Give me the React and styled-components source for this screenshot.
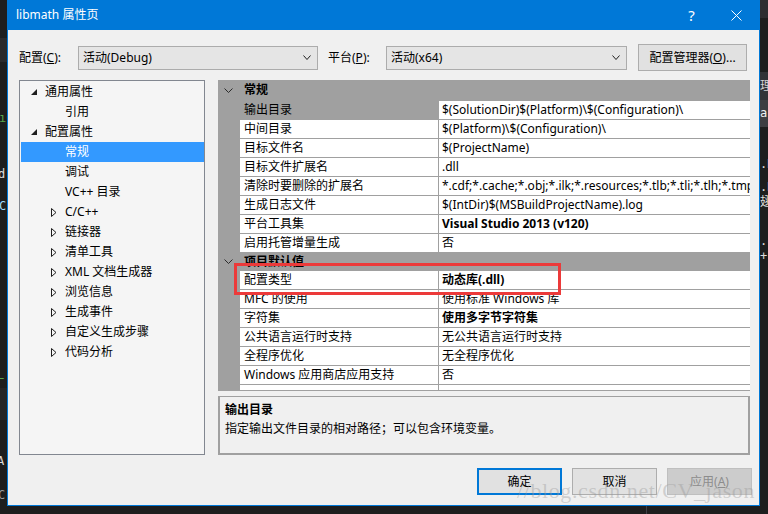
import React from 'react';
import styled, { createGlobalStyle } from 'styled-components';

const UI_FONT = '"Noto Sans", "Noto Sans CJK SC", sans-serif';

const GlobalStyle = createGlobalStyle`
  html, body {
    margin: 0;
    padding: 0;
    background: #1e1e1e;
  }
  body {
    font-family: ${UI_FONT};
    font-size: 12px;
    color: #000;
  }
  * {
    box-sizing: border-box;
  }
`;

const Page = styled.div`
  position: relative;
  width: 768px;
  height: 514px;
  overflow: hidden;
  background: #1e1e1e;
  display: flex;
  flex-direction: column;
`;

const Desk = styled.div`
  display: flex;
  height: 506px;
  flex: none;
`;

const EditorStrip = styled.div`
  width: ${p => p.$width}px;
  flex: none;
  display: flex;
  flex-direction: column;
  overflow: hidden;
  font-family: "DejaVu Sans Mono", "Noto Sans CJK SC", monospace;
  font-size: 12px;
`;

const StripPiece = styled.div`
  flex: none;
  height: ${p => p.$h}px;
  line-height: ${p => p.$h}px;
  overflow: hidden;
  background: ${p => p.$bg || 'transparent'};
  color: ${p => p.$color || '#dcdcdc'};
  white-space: nowrap;
  text-indent: ${p => p.$shift || 0}px;
`;

const BottomStrip = styled.div`
  flex: 1;
  display: flex;
  padding-left: 646px;
`;

const StripRule = styled.div`
  width: 1px;
  background: #3f3f46;
`;

// title + chrome
const Dialog = styled.div`
  width: 753px;
  height: 506px;
  flex: none;
  display: flex;
  flex-direction: column;
  background: #f0f0f0;
  border: 1px solid #0078d7;
  border-top: none;
`;

const TitleBar = styled.div`
  height: 30px;
  flex: none;
  display: flex;
  align-items: center;
  background: #0078d7;
  color: #fff;
  padding-left: 8px;
`;

const TitleText = styled.div`
  flex: 1;
  font-size: 12px;
  line-height: 16px;
`;

const CaptionButton = styled.div`
  width: 45px;
  height: 30px;
  display: flex;
  align-items: center;
  justify-content: center;
  font-size: 15px;
  color: #fff;
`;

const Body = styled.div`
  flex: 1;
  display: flex;
  flex-direction: column;
  padding: 0 7px 0 11px;
`;

const ConfigRow = styled.div`
  margin-top: 14px;
  height: 27px;
  display: flex;
  align-items: center;
`;

const FieldLabel = styled.div`
  width: ${p => p.$w}px;
  margin-left: ${p => p.$ml || 0}px;
  line-height: 16px;
`;

const Combo = styled.div`
  width: ${p => p.$w}px;
  height: 24px;
  display: flex;
  align-items: center;
  justify-content: space-between;
  padding: 0 6px 0 4px;
  background: #e5e5e5;
  border: 1px solid #acacac;
  line-height: 16px;
`;

const PushButton = styled.div`
  width: ${p => p.$w}px;
  height: 27px;
  margin-left: ${p => p.$ml || 0}px;
  display: flex;
  align-items: center;
  justify-content: center;
  line-height: 16px;
  background: ${p => (p.$disabled ? '#cccccc' : '#e1e1e1')};
  color: ${p => (p.$disabled ? '#8c8c8c' : '#000')};
  border: ${p =>
    p.$focused ? '2px solid #0078d7' : `1px solid ${p.$disabled ? '#bfbfbf' : '#adadad'}`};
`;

const Main = styled.div`
  margin-top: 9px;
  height: 375px;
  display: flex;
  gap: 13px;
`;

// tree
const Tree = styled.div`
  width: 186px;
  flex: none;
  background: #f5f5f5;
  border: 1px solid #828790;
  padding-top: 1px;
  display: flex;
  flex-direction: column;
`;

const TreeRow = styled.div`
  height: 20px;
  display: flex;
  align-items: center;
  padding-left: ${p => p.$indent}px;
  margin-left: 1px;
  background: ${p => (p.$selected ? '#3399ff' : 'transparent')};
  color: ${p => (p.$selected ? '#fff' : '#000')};
  line-height: 16px;
  white-space: nowrap;
`;

const Expander = styled.div`
  width: 17px;
  flex: none;
  display: flex;
  align-items: center;
  padding-left: 3px;
`;

// property grid
const RightCol = styled.div`
  position: relative;
  width: 532px;
  flex: none;
  display: flex;
  flex-direction: column;
  gap: 5px;
`;

const Grid = styled.div`
  height: 311px;
  flex: none;
  overflow: hidden;
  background: #a0a0a0;
  border-bottom: 1px solid #a0a0a0;
  display: flex;
  flex-direction: column;
  gap: 1px;
`;

const CategoryRow = styled.div`
  height: ${p => p.$h}px;
  flex: none;
  display: flex;
  align-items: center;
  font-weight: bold;
  line-height: 16px;
`;

const CategoryToggle = styled.div`
  width: 26px;
  flex: none;
  display: flex;
  padding-left: 6px;
`;

const PropRow = styled.div`
  height: 18px;
  flex: none;
  display: flex;
  padding-left: 22px;
  gap: 1px;
`;

const NameCell = styled.div`
  width: 198px;
  flex: none;
  padding-left: 4px;
  background: ${p => (p.$selected ? 'transparent' : '#fff')};
  line-height: 18px;
  white-space: nowrap;
  overflow: hidden;
`;

const ValueCell = styled.div`
  flex: 1;
  padding-left: 3px;
  background: #fff;
  line-height: 18px;
  white-space: nowrap;
  overflow: hidden;
  font-weight: ${p => (p.$bold ? 'bold' : 'normal')};
`;

const Description = styled.div`
  height: 59px;
  flex: none;
  padding: 3px 0 0 5px;
  background: #f0f0f0;
  border: 2px solid #a0a0a0;
  border-top-width: 1px;
  line-height: 19px;
`;

const DescTitle = styled.div`
  font-weight: bold;
`;

const Callout = styled.div`
  position: absolute;
  left: 16px;
  top: 183px;
  width: 327px;
  height: 32px;
  border: 3px solid #ec3a3a;
  pointer-events: none;
`;

const Footer = styled.div`
  margin-top: 13px;
  display: flex;
  justify-content: flex-end;
  gap: 10px;
`;

const Watermark = styled.div`
  position: absolute;
  left: 517px;
  top: 478px;
  font-family: "Liberation Serif", serif;
  font-size: 22px;
  line-height: 26px;
  letter-spacing: 0.6px;
  color: rgba(150, 150, 150, 0.38);
  white-space: nowrap;
  pointer-events: none;
`;

const ChevronDown = ({ w = 8, h = 5, color = '#1e1e1e' }) => (
  <svg width={w} height={h} viewBox={`0 0 ${w} ${h}`}>
    <polyline
      points={`0.5,0.5 ${w / 2},${h - 0.5} ${w - 0.5},0.5`}
      fill="none"
      stroke={color}
      strokeWidth="1"
    />
  </svg>
);

const ExpandedArrow = () => (
  <svg width="6" height="6" viewBox="0 0 6 6">
    <polygon points="6,0 6,6 0,6" fill="#1e1e1e" />
  </svg>
);

const CollapsedArrow = () => (
  <svg width="6" height="9" viewBox="0 0 6 9">
    <polygon points="0.5,0.5 5,4.5 0.5,8.5" fill="none" stroke="#1e1e1e" strokeWidth="1" />
  </svg>
);

const CloseGlyph = () => (
  <svg width="11" height="11" viewBox="0 0 11 11">
    <path d="M0.5 0.5 L10.5 10.5 M10.5 0.5 L0.5 10.5" stroke="#fff" strokeWidth="1" />
  </svg>
);

const leftPieces = [
  { y: 38, h: 24, bg: '#2a2a2c', text: '' },
  { y: 110, h: 16, color: '#57a64a', text: 'ıC', shift: -1 },
  { y: 166, h: 16, color: '#dcdcdc', text: 'd', shift: -2 },
  { y: 198, h: 16, color: '#9cdcfe', text: 'C', shift: -1 },
  { y: 367, h: 16, color: '#57a64a', text: 'L', shift: -3 },
  { y: 388, h: 32, bg: '#252526', text: '' },
  { y: 453, h: 16, color: '#dcdcdc', text: 'A', shift: -3 },
  { y: 488, h: 14, color: '#9b9b9b', text: 'C-', shift: -2 },
];

const rightPieces = [
  { y: 0, h: 18, bg: '#2d2d30', text: '' },
  { y: 72, h: 28, bg: '#333337', color: '#d4d4d4', text: '理' },
  { y: 100, h: 27, bg: '#3e3e42', color: '#f1f1f1', text: 'ar' },
  { y: 157, h: 14, color: '#dcdcdc', text: '.H' },
  { y: 181, h: 13, color: '#dcdcdc', text: '.H' },
  { y: 195, h: 14, color: '#dcdcdc', text: '翅' },
  { y: 234, h: 14, color: '#dcdcdc', text: '.c' },
  { y: 249, h: 14, color: '#dcdcdc', text: '+' },
];

const renderStrip = pieces => {
  let cursor = 0;
  const out = [];
  pieces.forEach((p, i) => {
    if (p.y > cursor) out.push(<StripPiece key={`gap-${i}`} $h={p.y - cursor} />);
    out.push(
      <StripPiece key={i} $h={p.h} $bg={p.bg} $color={p.color} $shift={p.shift}>
        {p.text}
      </StripPiece>
    );
    cursor = p.y + p.h;
  });
  return out;
};

const treeItems = [
  { label: '通用属性', level: 0, state: 'open' },
  { label: '引用', level: 1 },
  { label: '配置属性', level: 0, state: 'open' },
  { label: '常规', level: 1, selected: true },
  { label: '调试', level: 1 },
  { label: 'VC++ 目录', level: 1 },
  { label: 'C/C++', level: 1, state: 'closed' },
  { label: '链接器', level: 1, state: 'closed' },
  { label: '清单工具', level: 1, state: 'closed' },
  { label: 'XML 文档生成器', level: 1, state: 'closed' },
  { label: '浏览信息', level: 1, state: 'closed' },
  { label: '生成事件', level: 1, state: 'closed' },
  { label: '自定义生成步骤', level: 1, state: 'closed' },
  { label: '代码分析', level: 1, state: 'closed' },
];

const general = [
  { name: '输出目录', value: '$(SolutionDir)$(Platform)\\$(Configuration)\\', selected: true },
  { name: '中间目录', value: '$(Platform)\\$(Configuration)\\' },
  { name: '目标文件名', value: '$(ProjectName)' },
  { name: '目标文件扩展名', value: '.dll' },
  { name: '清除时要删除的扩展名', value: '*.cdf;*.cache;*.obj;*.ilk;*.resources;*.tlb;*.tli;*.tlh;*.tmp;*.rsp;*.pgc;*.pgd' },
  { name: '生成日志文件', value: '$(IntDir)$(MSBuildProjectName).log' },
  { name: '平台工具集', value: 'Visual Studio 2013 (v120)', bold: true },
  { name: '启用托管增量生成', value: '否' },
];

const defaults = [
  { name: '配置类型', value: '动态库(.dll)', bold: true },
  { name: 'MFC 的使用', value: '使用标准 Windows 库' },
  { name: '字符集', value: '使用多字节字符集', bold: true },
  { name: '公共语言运行时支持', value: '无公共语言运行时支持' },
  { name: '全程序优化', value: '无全程序优化' },
  { name: 'Windows 应用商店应用支持', value: '否' },
  { name: '', value: '' },
];

const Category = ({ title, h }) => (
  <CategoryRow $h={h}>
    <CategoryToggle>
      <ChevronDown w={9} h={5} color="#2b2b2b" />
    </CategoryToggle>
    {title}
  </CategoryRow>
);

const Prop = ({ item }) => (
  <PropRow>
    <NameCell $selected={item.selected}>{item.name}</NameCell>
    <ValueCell $bold={item.bold}>{item.value}</ValueCell>
  </PropRow>
);

const App = () => (
  <Page>
    <GlobalStyle />
    <Desk>
      <EditorStrip $width={7}>{renderStrip(leftPieces)}</EditorStrip>
      <Dialog>
        <TitleBar>
          <TitleText>libmath 属性页</TitleText>
          <CaptionButton>?</CaptionButton>
          <CaptionButton>
            <CloseGlyph />
          </CaptionButton>
        </TitleBar>
        <Body>
          <ConfigRow>
            <FieldLabel $w={59}>
              配置(<u>C</u>):
            </FieldLabel>
            <Combo $w={240}>
              活动(Debug)
              <ChevronDown />
            </Combo>
            <FieldLabel $w={58} $ml={10}>
              平台(<u>P</u>):
            </FieldLabel>
            <Combo $w={241}>
              活动(x64)
              <ChevronDown />
            </Combo>
            <PushButton $w={109} $ml={11}>
              配置管理器(<u>O</u>)...
            </PushButton>
          </ConfigRow>
          <Main>
            <Tree>
              {treeItems.map(item => (
                <TreeRow
                  key={item.label}
                  $indent={item.level === 0 ? 7 : 27}
                  $selected={item.selected}
                >
                  <Expander>
                    {item.state === 'open' && <ExpandedArrow />}
                    {item.state === 'closed' && <CollapsedArrow />}
                  </Expander>
                  {item.label}
                </TreeRow>
              ))}
            </Tree>
            <RightCol>
              <Grid>
                <Category title="常规" h={20} />
                {general.map(item => (
                  <Prop key={item.name} item={item} />
                ))}
                <Category title="项目默认值" h={17} />
                {defaults.map((item, i) => (
                  <Prop key={i} item={item} />
                ))}
              </Grid>
              <Description>
                <DescTitle>输出目录</DescTitle>
                <div>指定输出文件目录的相对路径；可以包含环境变量。</div>
              </Description>
              <Callout />
            </RightCol>
          </Main>
          <Footer>
            <PushButton $w={85} $focused>
              确定
            </PushButton>
            <PushButton $w={85}>取消</PushButton>
            <PushButton $w={85} $disabled>
              应用(<u>A</u>)
            </PushButton>
          </Footer>
        </Body>
      </Dialog>
      <EditorStrip $width={8}>{renderStrip(rightPieces)}</EditorStrip>
    </Desk>
    <BottomStrip>
      <StripRule />
    </BottomStrip>
    <Watermark>//blog.csdn.net/CV_jason</Watermark>
  </Page>
);

export default App;
